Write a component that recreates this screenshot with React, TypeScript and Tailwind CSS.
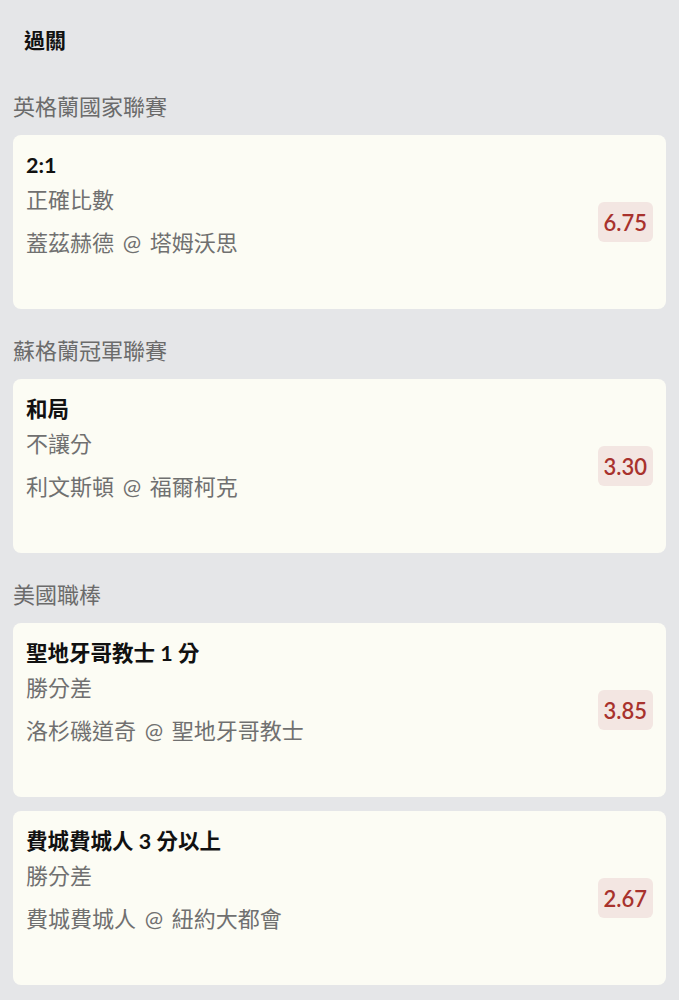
const groups = [
  {
    league: "英格蘭國家聯賽",
    bets: [{ pick: "2:1", market: "正確比數", match: "蓋茲赫德 @ 塔姆沃思", odds: "6.75" }],
  },
  {
    league: "蘇格蘭冠軍聯賽",
    bets: [{ pick: "和局", market: "不讓分", match: "利文斯頓 @ 福爾柯克", odds: "3.30" }],
  },
  {
    league: "美國職棒",
    bets: [
      { pick: "聖地牙哥教士 1 分", market: "勝分差", match: "洛杉磯道奇 @ 聖地牙哥教士", odds: "3.85" },
      { pick: "費城費城人 3 分以上", market: "勝分差", match: "費城費城人 @ 紐約大都會", odds: "2.67" },
    ],
  },
];

export default function App() {
  return (
    <div className="min-h-screen w-full bg-[#e5e6e8] px-[13px] pb-6 font-['Lato','Noto_Sans_CJK_TC',sans-serif]">
      {/* Header */}
      <div className="pt-[26px] pl-[11px] text-[21px] leading-[28px] font-bold text-[#111]">過關</div>

      <div className="mt-[39px] flex flex-col gap-[28px]">
        {groups.map((g) => (
          <div key={g.league}>
            <div className="text-[22px] leading-[28px] text-[#6b6b6b]">{g.league}</div>
            <div className="mt-[14px] flex flex-col gap-[14px]">
              {g.bets.map((b) => (
                <div
                  key={b.pick}
                  className="h-[174px] rounded-[8px] bg-[#fcfcf4] pl-[13px] pr-[13px] flex items-center justify-between"
                >
                  <div className="flex flex-col self-start pt-[16px]">
                    <div className="text-[21.5px] leading-[28px] font-bold text-[#111]">{b.pick}</div>
                    <div className="mt-[7px] text-[22px] leading-[28px] text-[#707070]">{b.market}</div>
                    <div className="mt-[15px] text-[22px] leading-[28px] text-[#707070] [word-spacing:3px]">{b.match}</div>
                  </div>
                  <div className="h-[40px] px-[6px] rounded-[6px] bg-[#f3e6e2] flex items-center text-[22px] font-semibold text-[#a8322d]">
                    {b.odds}
                  </div>
                </div>
              ))}
            </div>
          </div>
        ))}
      </div>
    </div>
  );
}
